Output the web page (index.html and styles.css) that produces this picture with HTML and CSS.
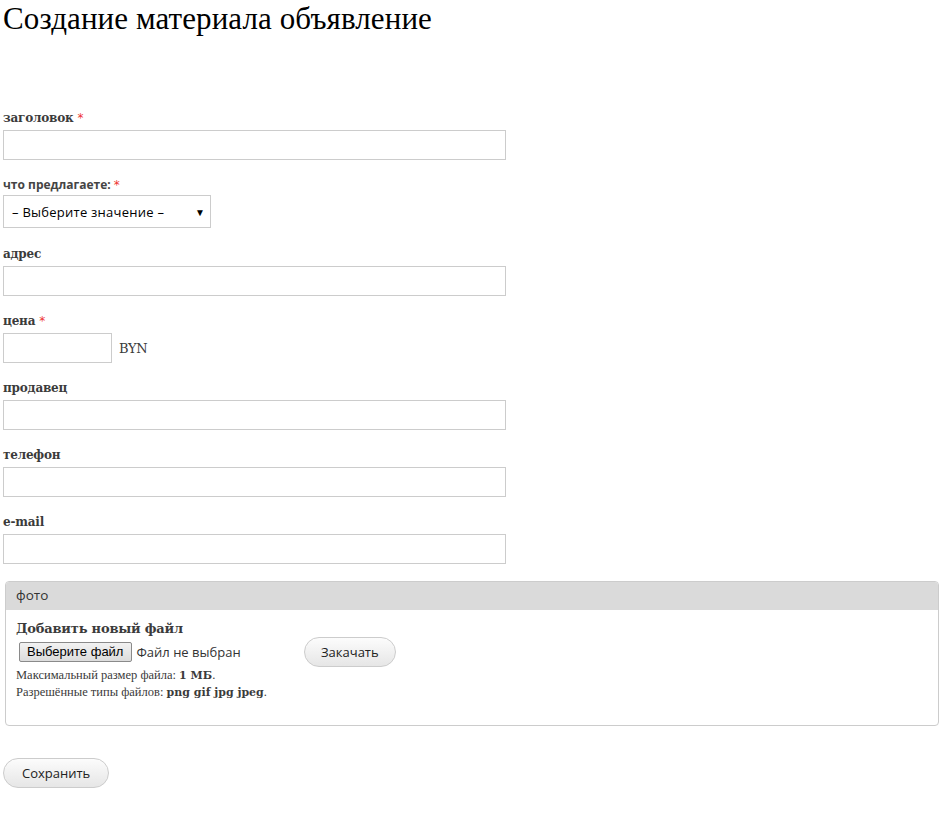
FILE: index.html
```html
<!DOCTYPE html>
<html lang="ru">
<head>
<meta charset="utf-8">
<title>Создание материала объявление</title>
<link rel="stylesheet" href="styles.css">
</head>
<body>
<h1 class="page-title">Создание материала объявление</h1>
<form class="node-form">
  <div class="form-item">
    <label class="label">заголовок <span class="req">*</span></label>
    <input class="text" type="text">
  </div>
  <div class="form-item form-item-select">
    <label class="label label-sans">что предлагаете: <span class="req">*</span></label>
    <div class="select"><span>– Выберите значение –</span><span class="arrow">▼</span></div>
  </div>
  <div class="form-item">
    <label class="label">адрес</label>
    <input class="text" type="text">
  </div>
  <div class="form-item">
    <label class="label">цена <span class="req">*</span></label>
    <div class="price-row"><input class="text short" type="text"><span class="suffix">BYN</span></div>
  </div>
  <div class="form-item">
    <label class="label">продавец</label>
    <input class="text" type="text">
  </div>
  <div class="form-item">
    <label class="label">телефон</label>
    <input class="text" type="text">
  </div>
  <div class="form-item">
    <label class="label">e-mail</label>
    <input class="text" type="text">
  </div>
  <div class="fieldset">
    <div class="legend">фото</div>
    <div class="fieldset-body">
      <div class="label">Добавить новый файл</div>
      <div class="upload-row">
        <div class="file-input"><span class="file-btn">Выберите файл</span><span class="file-none">Файл не выбран</span></div>
        <span class="btn">Закачать</span>
      </div>
      <div class="desc">Максимальный размер файла: <strong>1 МБ</strong>.<br>Разрешённые типы файлов: <strong>png gif jpg jpeg</strong>.</div>
    </div>
  </div>
  <div class="actions"><span class="btn btn-save">Сохранить</span></div>
</form>
</body>
</html>
```
FILE: styles.css
```css
html, body { margin: 0; padding: 0; background: #fff; }
body { padding: 0 3px; color: #3b3b3b; font-family: "DejaVu Serif", serif; }
.page-title {
  margin: 0;
  font-family: "Liberation Serif", serif;
  font-weight: normal;
  font-size: 31px;
  line-height: 38px;
  letter-spacing: 0.1px;
  color: #000;
}
.node-form { padding-top: 71px; }
.form-item { margin-bottom: 16px; }
.form-item-select { margin-bottom: 17px; }
.label {
  display: block;
  font-family: "DejaVu Serif", serif;
  font-weight: bold;
  font-size: 12px;
  line-height: 19px;
  margin-bottom: 2px;
  color: #3b3b3b;
  letter-spacing: -0.2px;
}
.label-sans {
  font-family: "Open Sans", sans-serif;
  font-size: 12px;
  letter-spacing: 0;
  line-height: 18px;
  margin-bottom: 1px;
  color: #444;
}
.req { color: #e33; font-weight: normal; font-family: "DejaVu Sans", sans-serif; }
.text {
  display: block;
  box-sizing: border-box;
  width: 503px;
  height: 30px;
  border: 1px solid #ccc;
  margin: 0;
  padding: 0 6px;
  background: #fff;
}
.text.short { width: 109px; }
.price-row { display: flex; align-items: center; gap: 7px; }
.suffix { font-family: "DejaVu Serif", serif; font-size: 13px; color: #3b3b3b; letter-spacing: -0.3px; }
.select {
  box-sizing: border-box;
  width: 208px;
  height: 33px;
  border: 1px solid #ccc;
  display: flex;
  align-items: center;
  justify-content: space-between;
  padding: 0 5px 0 8px;
  font-family: "Open Sans", sans-serif;
  font-size: 13px;
  letter-spacing: 0.25px;
  color: #000;
}
.select .arrow { font-size: 10px; letter-spacing: 0; }
.fieldset {
  margin: 17px 3px 0 2px;
  border: 1px solid #ccc;
  border-radius: 4px;
  height: 145px;
  box-sizing: border-box;
  overflow: hidden;
}
.legend {
  background: #dadada;
  height: 28px;
  line-height: 27px;
  padding-left: 10px;
  font-family: "Open Sans", sans-serif;
  font-size: 13.5px;
  color: #333;
}
.fieldset-body { padding: 10px 10px 0 10px; }
.fieldset-body .label { font-size: 13px; line-height: 17px; margin-bottom: 0; }
.upload-row { display: flex; align-items: center; height: 30px; }
.file-input { display: flex; align-items: center; width: 285px; padding-left: 3px; }
.file-btn {
  font-family: "Liberation Sans", sans-serif;
  font-size: 13px;
  color: #000;
  border: 1px solid #8a8a8a;
  background: linear-gradient(#f2f2f2, #dcdcdc);
  padding: 1px 8px 1px 7px;
  border-radius: 2px;
  line-height: 16px;
}
.file-none { font-family: "Open Sans", sans-serif; font-size: 13px; color: #333; margin-left: 4px; }
.btn {
  display: inline-block;
  box-sizing: border-box;
  height: 30px;
  line-height: 28px;
  padding: 0 16px;
  border: 1px solid #ccc;
  border-radius: 15px;
  background: linear-gradient(#fcfcfc, #e6e6e6);
  font-family: "Open Sans", sans-serif;
  font-size: 13px;
  color: #222;
}
.desc {
  font-family: "Liberation Serif", serif;
  font-size: 12.5px;
  line-height: 16px;
  color: #3b3b3b;
}
.desc strong { font-family: "DejaVu Serif", serif; font-size: 11px; }
.actions { margin-top: 32px; padding-left: 0; }
.btn-save { padding: 0 18px; }
```
